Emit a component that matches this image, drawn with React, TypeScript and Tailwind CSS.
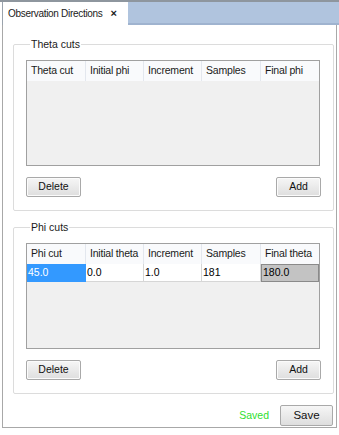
import React from "react";

const font = { fontFamily: '"Liberation Sans", Arial, sans-serif' };

function Btn({ label, w }: { label: string; w: string }) {
  return (
    <button className={`h-[20px] ${w} border border-[#a9a9a9] rounded-[2px] bg-gradient-to-b from-[#f6f6f6] to-[#dedede] text-[10.5px] text-[#111] flex items-center justify-center shadow-[inset_0_0_0_1px_#fbfbfb]`}>
      {label}
    </button>
  );
}

function Table({
  headers,
  row,
}: {
  headers: string[];
  row?: string[];
}) {
  return (
    <div className="h-[106px] w-[294px] border border-[#a0a0a0] bg-[#f0f0f0] flex flex-col">
      <div className="grid grid-cols-[59px_58px_58px_59px_58px] h-[20px] bg-[#f9fafc]">
        {headers.map((h, i) => (
          <div
            key={h}
            className={`flex items-center pl-[4px] text-[10.5px] tracking-[-0.2px] whitespace-nowrap text-[#1a1a1a] ${i < 4 ? "border-r border-[#e3e7ee]" : ""}`}
          >
            {h}
          </div>
        ))}
      </div>
      {row && (
        <div className="grid grid-cols-[59px_58px_58px_59px_58px] h-[15px]">
          <div className="bg-[#3399ff] text-white text-[10.5px] pl-[1px] flex items-center">{row[0]}</div>
          <div className="bg-white border-r border-b border-[#d6d6d6] text-[10.5px] pl-[1px] flex items-center">{row[1]}</div>
          <div className="bg-white border-r border-b border-[#d6d6d6] text-[10.5px] pl-[1px] flex items-center">{row[2]}</div>
          <div className="bg-white border-r border-b border-[#d6d6d6] text-[10.5px] pl-[1px] flex items-center">{row[3]}</div>
          <div className="bg-[#c3c3c3] border border-[#8a8a8a] text-[10.5px] pl-[1px] flex items-center">{row[4]}</div>
        </div>
      )}
    </div>
  );
}

function Group({
  title,
  headers,
  row,
}: {
  title: string;
  headers: string[];
  row?: string[];
}) {
  return (
    <fieldset className="border border-[#dcdcdc] rounded-[2px] w-[320px] pl-[12px] pr-[12px] pb-[13px] pt-[10px] mx-0">
      <legend className="ml-[4px] px-[1px] text-[10.5px] text-[#1a1a1a] leading-[12px]">{title}</legend>
      <Table headers={headers} row={row} />
      <div className="flex justify-between mt-[11px] w-[295px]">
        <Btn label="Delete" w="w-[55px]" />
        <Btn label="Add" w="w-[45px]" />
      </div>
    </fieldset>
  );
}

export default function App() {
  return (
    <div className="w-[339px] h-[435px] bg-white flex flex-col" style={font}>
      <div className="h-[2px] bg-[#8e969e]" />
      <div className="flex h-[23px]">
        <div className="w-[126px] ml-[2px] bg-white border-l border-[#9aa3ad] flex items-center pl-[5px] text-[10px] tracking-[-0.3px] whitespace-nowrap text-[#1a1a1a] gap-[8px]">
          <span>Observation Directions</span>
          <span className="font-bold text-[11px] leading-none">×</span>
        </div>
        <div className="flex-1 bg-[#b0c4de] border-b-[2px] border-[#9fb3cf]" />
      </div>
      <div className="mx-[2px] h-[403px] border-l border-r border-b border-[#a8a8a8] bg-white flex flex-col pl-[10px] pt-[13px]">
        <Group
          title="Theta cuts"
          headers={["Theta cut", "Initial phi", "Increment", "Samples", "Final phi"]}
        />
        <div className="h-[10px]" />
        <Group
          title="Phi cuts"
          headers={["Phi cut", "Initial theta", "Increment", "Samples", "Final theta"]}
          row={["45.0", "0.0", "1.0", "181", "180.0"]}
        />
        <div className="flex items-center justify-end gap-[11px] mt-[11px] pr-[3px]">
          <span className="text-[10.5px] text-[#2ee02e]">Saved</span>
          <button className="h-[21px] w-[53px] border border-[#a9a9a9] rounded-[2px] bg-gradient-to-b from-[#f6f6f6] to-[#dedede] text-[11.5px] text-[#111] flex items-center justify-center">
            Save
          </button>
        </div>
      </div>
    </div>
  );
}
